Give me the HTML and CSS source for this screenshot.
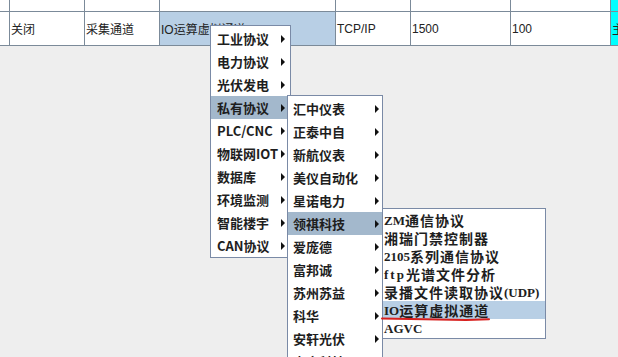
FILE: index.html
```html
<!DOCTYPE html>
<html lang="zh">
<head>
    <meta charset="UTF-8">
    <title>通道配置</title>
    <link rel="stylesheet" href="styles.css">
</head>
<body>
    <div class="grid">
        <div class="cell"></div>
        <div class="cell"></div>
        <div class="cell"></div>
        <div class="cell"></div>
        <div class="cell"></div>
        <div class="cell"></div>
        <div class="cell"></div>
        <div class="cell cyan"></div>

        <div class="cell"></div>
        <div class="cell">关闭</div>
        <div class="cell">采集通道</div>
        <div class="cell selected">IO运算虚拟通道</div>
        <div class="cell">TCP/IP</div>
        <div class="cell">1500</div>
        <div class="cell">100</div>
        <div class="cell cyan">主</div>
    </div>

    <div class="menu menu-main">
        <div class="item">工业协议<span class="arrow"></span></div>
        <div class="item">电力协议<span class="arrow"></span></div>
        <div class="item">光伏发电<span class="arrow"></span></div>
        <div class="item armed">私有协议<span class="arrow"></span></div>
        <div class="item">PLC/CNC<span class="arrow"></span></div>
        <div class="item">物联网IOT<span class="arrow"></span></div>
        <div class="item">数据库<span class="arrow"></span></div>
        <div class="item">环境监测<span class="arrow"></span></div>
        <div class="item">智能楼宇<span class="arrow"></span></div>
        <div class="item">CAN协议<span class="arrow"></span></div>
    </div>

    <div class="menu menu-vendor">
        <div class="item">汇中仪表<span class="arrow"></span></div>
        <div class="item">正泰中自<span class="arrow"></span></div>
        <div class="item">新航仪表<span class="arrow"></span></div>
        <div class="item">美仪自动化<span class="arrow"></span></div>
        <div class="item">星诺电力<span class="arrow"></span></div>
        <div class="item armed">领祺科技<span class="arrow"></span></div>
        <div class="item">爱庞德<span class="arrow"></span></div>
        <div class="item">富邦诚<span class="arrow"></span></div>
        <div class="item">苏州苏益<span class="arrow"></span></div>
        <div class="item">科华<span class="arrow"></span></div>
        <div class="item">安轩光伏<span class="arrow"></span></div>
        <div class="item">嘉宏科技<span class="arrow"></span></div>
    </div>

    <div class="menu menu-leaf">
        <div class="leaf"><span class="lat">ZM</span>通信协议</div>
        <div class="leaf">湘瑞门禁控制器</div>
        <div class="leaf"><span class="lat">2105</span>系列通信协议</div>
        <div class="leaf"><span class="lat wide">ftp</span>光谱文件分析</div>
        <div class="leaf">录播文件读取协议<span class="lat">(UDP)</span></div>
        <div class="leaf active"><span class="lat">IO</span>运算虚拟通道</div>
        <div class="leaf"><span class="lat">AGVC</span></div>
    </div>

    <!-- hand-drawn red mark under the chosen entry -->
    <svg class="mark" width="120" height="8" viewBox="0 0 120 8">
        <path d="M1 2.5 L85 4 M85 4 L108 3.2" stroke="#d8201e" stroke-width="2" fill="none" stroke-linecap="round"/>
    </svg>
</body>
</html>
```

FILE: styles.css
```css
* {
    margin: 0;
    padding: 0;
    box-sizing: border-box;
}

body {
    background-color: #eeeeee;
    width: 618px;
    height: 357px;
    overflow: hidden;
    position: relative;
    font-family: "Liberation Sans", "Noto Sans CJK SC", sans-serif;
}

.grid {
    display: grid;
    grid-template-columns: 9px 74px 74px 175px 74px 99px 99px 1fr;
    grid-template-rows: 11px 33px;
    gap: 1px;
    background-color: #7b8a99;
    border-bottom: 1px solid #7b8a99;
    width: 618px;
}

.cell {
    background-color: #ffffff;
    color: #222222;
    font-size: 12px;
    padding-left: 1px;
    display: flex;
    align-items: center;
    white-space: nowrap;
    overflow: hidden;
}

.selected {
    background-color: #b8cfe5;
}

.cyan {
    background-color: #00ffff;
}

.menu {
    position: absolute;
    background-color: #ffffff;
    border: 1px solid #7a8aa6;
    padding: 1px 0;
    font-family: "Noto Sans CJK SC", "Liberation Sans", sans-serif;
    font-weight: 700;
    font-size: 13px;
    color: #1e1e1e;
    overflow: hidden;
}

.menu-main {
    left: 210px;
    top: 25px;
    width: 81px;
    height: 233px;
}

.menu-vendor {
    left: 287px;
    top: 95px;
    width: 96px;
    height: 280px;
}

.menu-leaf {
    left: 382px;
    top: 208px;
    width: 164px;
    height: 131px;
    padding-top: 2px;
    font-size: 14px;
    letter-spacing: 1px;
}

.item {
    height: 23px;
    display: flex;
    align-items: center;
    justify-content: space-between;
    padding: 0 5px 0 6px;
    line-height: 1;
    white-space: nowrap;
}

.menu-vendor .item {
    padding: 0 3px 0 5px;
}

.item.armed {
    background-color: #a3b8cc;
}

.arrow {
    width: 0;
    height: 0;
    border-top: 4px solid transparent;
    border-bottom: 4px solid transparent;
    border-left: 4px solid #111111;
}

.leaf {
    height: 18px;
    display: flex;
    align-items: center;
    padding-left: 1px;
    line-height: 1;
    white-space: nowrap;
}

.leaf.active {
    background-color: #b8cfe5;
}

.lat {
    font-family: "Liberation Serif", serif;
    font-size: 13px;
    letter-spacing: 0;
}

.lat.wide {
    letter-spacing: 2px;
}

.mark {
    position: absolute;
    left: 381px;
    top: 316px;
}
```
